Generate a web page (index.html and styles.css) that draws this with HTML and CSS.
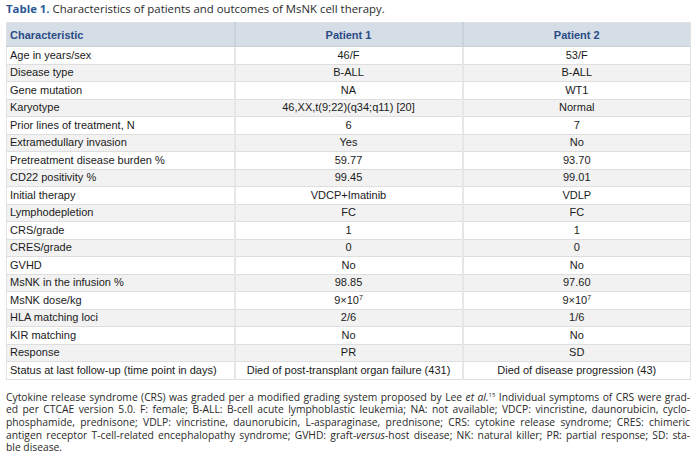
FILE: index.html
```html
<!DOCTYPE html>
<html lang="en">
<head>
<meta charset="utf-8">
<title>Table 1</title>
<link rel="stylesheet" href="styles.css">
</head>
<body>
<div class="page">
  <p class="caption"><span class="label">Table 1.</span> Characteristics of patients and outcomes of MsNK cell therapy.</p>
  <table class="data">
    <colgroup><col class="c1"><col class="c2"><col class="c3"></colgroup>
    <thead>
      <tr><th class="left">Characteristic</th><th>Patient 1</th><th>Patient 2</th></tr>
    </thead>
    <tbody>
      <tr><td>Age in years/sex</td><td>46/F</td><td>53/F</td></tr>
      <tr><td>Disease type</td><td>B-ALL</td><td>B-ALL</td></tr>
      <tr><td>Gene mutation</td><td>NA</td><td>WT1</td></tr>
      <tr><td>Karyotype</td><td>46,XX,t(9;22)(q34;q11) [20]</td><td>Normal</td></tr>
      <tr><td>Prior lines of treatment, N</td><td>6</td><td>7</td></tr>
      <tr><td>Extramedullary invasion</td><td>Yes</td><td>No</td></tr>
      <tr><td>Pretreatment disease burden %</td><td>59.77</td><td>93.70</td></tr>
      <tr><td>CD22 positivity %</td><td>99.45</td><td>99.01</td></tr>
      <tr><td>Initial therapy</td><td>VDCP+Imatinib</td><td>VDLP</td></tr>
      <tr><td>Lymphodepletion</td><td>FC</td><td>FC</td></tr>
      <tr><td>CRS/grade</td><td>1</td><td>1</td></tr>
      <tr><td>CRES/grade</td><td>0</td><td>0</td></tr>
      <tr><td>GVHD</td><td>No</td><td>No</td></tr>
      <tr><td>MsNK in the infusion %</td><td>98.85</td><td>97.60</td></tr>
      <tr><td>MsNK dose/kg</td><td>9×10<sup>7</sup></td><td>9×10<sup>7</sup></td></tr>
      <tr><td>HLA matching loci</td><td>2/6</td><td>1/6</td></tr>
      <tr><td>KIR matching</td><td>No</td><td>No</td></tr>
      <tr><td>Response</td><td>PR</td><td>SD</td></tr>
      <tr><td>Status at last follow-up (time point in days)</td><td>Died of post-transplant organ failure (431)</td><td>Died of disease progression (43)</td></tr>
    </tbody>
  </table>
  <div class="notes">
    <span class="line">Cytokine release syndrome (CRS) was graded per a modified grading system proposed by Lee <i>et al.</i><sup>15</sup> Individual symptoms of CRS were grad-</span>
    <span class="line">ed per CTCAE version 5.0. F: female; B-ALL: B-cell acute lymphoblastic leukemia; NA: not available; VDCP: vincristine, daunorubicin, cyclo-</span>
    <span class="line">phosphamide, prednisone; VDLP: vincristine, daunorubicin, L-asparaginase, prednisone; CRS: cytokine release syndrome; CRES: chimeric</span>
    <span class="line">antigen receptor T-cell-related encephalopathy syndrome; GVHD: graft-<i>versus</i>-host disease; NK: natural killer; PR: partial response; SD: sta-</span>
    <span class="line last">ble disease.</span>
  </div>
</div>
</body>
</html>
```
FILE: styles.css
```css
html, body {
  margin: 0;
  padding: 0;
  background: #ffffff;
}

.page {
  padding: 2px 10px 0 6px;
  width: 684px;
}

.caption {
  margin: 0;
  height: 20px;
  font-family: "Open Sans", "Noto Sans", sans-serif;
  font-size: 11.4px;
  line-height: 14px;
  color: #2a2a2a;
}

.caption .label {
  font-weight: 700;
  color: #2b5797;
}

.data {
  width: 684px;
  border-collapse: collapse;
  table-layout: fixed;
  font-family: "Liberation Sans", Arial, sans-serif;
  font-size: 11px;
  color: #1a1a1a;
  border: 1px solid #e2e2e2;
}

.data col {
  width: 228px;
}

.data th {
  height: 23px;
  padding: 0 3px;
  background: #d5dde6;
  color: #2a4c86;
  font-weight: 700;
  text-align: center;
  border-left: 2px solid #c9d1da;
  border-bottom: 1px solid #c8ced6;
}

.data th.left {
  text-align: left;
}

.data td {
  height: 16.5px;
  padding: 0 3px;
  line-height: 13px;
  text-align: center;
  border-left: 2px solid #e6e6e6;
  border-bottom: 1px solid #dedede;
  white-space: nowrap;
}

.data td:first-child,
.data th:first-child {
  text-align: left;
  border-left: none;
}

.data tbody tr:nth-child(odd) td {
  background: #ffffff;
}

.data tbody tr:nth-child(even) td {
  background: #f2f2f2;
}

.data sup {
  font-size: 7px;
  line-height: 0;
  vertical-align: 4px;
}

.notes {
  margin-top: 11px;
  font-family: "Open Sans", "Noto Sans", sans-serif;
  font-size: 10.3px;
  line-height: 12.7px;
  color: #2a2a2a;
}

.notes .line {
  display: block;
  text-align: justify;
  text-align-last: justify;
  white-space: nowrap;
}

.notes .line.last {
  text-align-last: left;
}

.notes sup {
  font-size: 6px;
  line-height: 0;
  vertical-align: 4px;
}
```
